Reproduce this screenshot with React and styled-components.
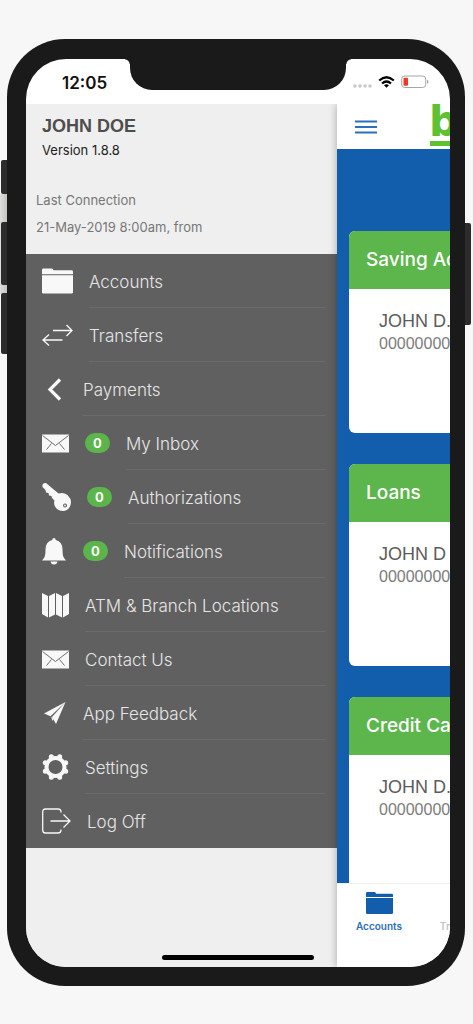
import React from "react";
import styled, { createGlobalStyle } from "styled-components";

const App = () => {
  return (
    <Page>
      <GlobalStyle />
      <Phone>
        <KeyShade />
        <SideKey side="left" top={121} height={34} />
        <SideKey side="left" top={183} height={63} />
        <SideKey side="left" top={254} height={61} />
        <SideKey side="right" top={184} height={102} />
        <Screen>
          <StatusBar>
            <Clock>12:05</Clock>
            <Notch />
            <StatusIcons>
              <Signal />
              <Wifi />
              <Battery />
            </StatusIcons>
          </StatusBar>
          <Content>
            <Drawer>
              <Profile>
                <UserName>JOHN DOE</UserName>
                <Version>Version 1.8.8</Version>
                <Connection>Last Connection</Connection>
                <Connection>21-May-2019 8:00am, from</Connection>
              </Profile>
              <Menu>
                {menuItems.map(item => (
                  <MenuRow key={item.label} {...item} />
                ))}
              </Menu>
            </Drawer>
            <Main>
              <TopBar>
                <MenuButton type="button" aria-label="Menu">
                  <Bars />
                </MenuButton>
                <Logo>b</Logo>
              </TopBar>
              <Cards>
                {accounts.map(account => (
                  <Card key={account.title}>
                    <CardTitle>{account.title}</CardTitle>
                    <CardBody>
                      <Owner>{account.owner}</Owner>
                      <Number>{account.number}</Number>
                    </CardBody>
                  </Card>
                ))}
              </Cards>
              <Tabs>
                <Tab type="button" active>
                  <FolderIcon width="27" height="24" />
                  <span>Accounts</span>
                </Tab>
                <Tab type="button">
                  <TransferIcon width="26" height="24" />
                  <span>Transfers</span>
                </Tab>
              </Tabs>
            </Main>
          </Content>
          <HomeIndicator />
        </Screen>
      </Phone>
    </Page>
  );
};

export default App;

const MenuRow = ({ icon: Icon, size, label, badge }) => {
  return (
    <MenuItem>
      <MenuAction type="button">
        <Icon width={size} height="30" />
        {badge !== undefined && <Badge>{badge}</Badge>}
        <MenuLabel>{label}</MenuLabel>
      </MenuAction>
    </MenuItem>
  );
};

const FolderIcon = props => (
  <svg viewBox="0 0 32 28" fill="currentColor" {...props}>
    <path d="M0 2.5Q0 1 1.5 1H10q1 0 1.5 1l.5 1h18.500Q32 3 32 4.500V7H0z" />
    <path d="M0 8h32v17.500q0 1.500-1.500 1.500h-29Q0 27 0 25.500z" />
  </svg>
);

const TransferIcon = props => (
  <svg
    viewBox="0 0 31 30"
    fill="none"
    stroke="currentColor"
    strokeWidth="1.3"
    {...props}
  >
    <path d="M11 10.500H29.500M24.500 5l5.500 5.500-5.500 5.500M20.500 20H1.500M7 14.500L1 20l6 5.500" />
  </svg>
);

const BackIcon = props => (
  <svg
    viewBox="0 0 25 30"
    fill="none"
    stroke="currentColor"
    strokeWidth="3.2"
    {...props}
  >
    <path d="M18 5.500L8 15.500l10 10" />
  </svg>
);

const MailIcon = props => (
  <svg viewBox="0 0 27 30" {...props}>
    <path d="M0 6.500h27v18H0z" fill="currentColor" />
    <path
      d="M.5 7.500l13 10 13-10M4.500 21.500l5-6M22.500 21.500l-5-6"
      fill="none"
      stroke="#707070"
      strokeWidth="1"
    />
  </svg>
);

const KeyIcon = props => (
  <svg viewBox="0 0 29 30" fill="currentColor" {...props}>
    <path
      fillRule="evenodd"
      d="M.5 2.500Q1.500.5 4 1l12.500 10.500q5-1.500 9 1.500 3.500 3.500 3.500 7-.5 7.500-7 9-6 .5-9-4.500-1.500-3-.5-6L10 16l-.5-2-2.500-.5-.5-2.500-2.500-.5-.5-2.500L.5 5zM23 21.500a2 2 0 1 0 .1 4 2 2 0 0 0-.1-4zm0 1.100a.9.9 0 1 1 0 1.800.9.9 0 0 1 0-1.800z"
    />
  </svg>
);

const BellIcon = props => (
  <svg viewBox="0 0 25 30" fill="currentColor" {...props}>
    <path d="M12 2q1.500 0 1.800 2 6.700 1.500 6.700 9.500 0 6.500 1.500 8.500l2 2.500H0L2 22q1.500-2 1.500-8.500Q3.500 5.500 10.200 4 10.500 2 12 2z" />
    <path d="M8.500 25.500h7q-.5 3-3.500 3t-3.500-3z" />
  </svg>
);

const MapIcon = props => (
  <svg viewBox="0 0 27 30" fill="currentColor" {...props}>
    <path d="M0 3l6 3v21.500L0 24zM7 6l6-3v21.500l-6 3zM14 3l6 3v21.500l-6-3zM21 6l6-3v21l-6 3.500z" />
  </svg>
);

const PlaneIcon = props => (
  <svg viewBox="0 0 25 30" fill="currentColor" {...props}>
    <path d="M23.500 4L2 15.500l6.500 2.800zM23.500 4L10 19l4 7z" />
    <path d="M9 18.500l1.500 4.500 1-2z" />
  </svg>
);

const GearIcon = props => (
  <svg viewBox="-13.500 -15 27 30" fill="none" stroke="currentColor" {...props}>
    <circle r="9" strokeWidth="4" />
    <path
      strokeWidth="5"
      strokeLinecap="round"
      d="M4.200-10.200v0M10.200-4.200v0M10.200 4.200v0M4.200 10.200v0M-4.200 10.200v0M-10.200 4.200v0M-10.200-4.200v0M-4.200-10.200v0"
    />
  </svg>
);

const LogoutIcon = props => (
  <svg
    viewBox="0 0 29 30"
    fill="none"
    stroke="currentColor"
    strokeWidth="1.300"
    {...props}
  >
    <path d="M19 6.500V6q0-3-3-3H3.500Q.7 3 .7 6v18q0 3 2.800 3H16q3 0 3-3v-.5M8.500 15H28M21.500 8.500L28 15l-6.500 6.500" />
  </svg>
);

const Bars = () => (
  <svg width="22" height="14" viewBox="0 0 22 14" stroke="#2b70ba" strokeWidth="2">
    <path d="M0 1.500h22M0 7h22M0 12.500h22" />
  </svg>
);

const Signal = () => (
  <svg width="19" height="14" viewBox="0 0 19 14" fill="#c9c9c9">
    <circle cx="2" cy="11" r="1.800" />
    <circle cx="7" cy="11" r="1.800" />
    <circle cx="12" cy="11" r="1.800" />
    <circle cx="17" cy="11" r="1.800" />
  </svg>
);

const Wifi = () => (
  <svg width="17" height="14" viewBox="0 0 17 14" fill="none" stroke="#000" strokeWidth="2.200">
    <path d="M1.200 5.500q7.300-6.500 14.600 0M4 8.500q4.500-4 9 0" />
    <path d="M8.500 12.800L6 10.300q2.500-2 5 0z" fill="#000" stroke="none" />
  </svg>
);

const Battery = () => (
  <svg width="28" height="14" viewBox="0 0 28 14">
    <rect x=".7" y="1" width="24" height="11.500" rx="3" fill="none" stroke="#a6a6a6" />
    <rect x="2.500" y="2.800" width="4.500" height="8" rx="1" fill="#f2382c" />
    <path d="M26 4.800q1.500.5 1.500 2t-1.500 2z" fill="#a6a6a6" />
  </svg>
);

const GlobalStyle = createGlobalStyle`
  * {
    box-sizing: border-box;
  }

  body {
    margin: 0;
    background: #f7f7f7;
    font-family: Inter, "Liberation Sans", sans-serif;
  }

  button {
    border: 0;
    padding: 0;
    background: none;
    font-family: inherit;
  }

  svg {
    flex: none;
    display: block;
  }
`;

const Page = styled.div`
  display: flex;
  min-height: 100vh;
  padding: 39px 8px 38px 7px;
`;

const Phone = styled.div`
  position: relative;
  display: flex;
  flex: 1;
  min-width: 0;
  padding: 20px 15px 19px 19px;
  border-radius: 58px;
  background: #1a1a1a;
`;

const KeyShade = styled.div`
  position: absolute;
  top: 155px;
  right: 100%;
  width: 7px;
  height: 100px;
  background: linear-gradient(90deg, #dededc, #c4c4c2);
`;

const SideKey = styled.div.withConfig({
  shouldForwardProp: prop => !["side", "top", "height"].includes(prop)
})`
  position: absolute;
  ${props => props.side}: -6px;
  top: ${props => props.top}px;
  width: 6px;
  height: ${props => props.height}px;
  border-radius: ${props => (props.side === "left" ? "2px 0 0 2px" : "0 2px 2px 0")};
  background: #2c2c2c;
`;

const Screen = styled.div`
  position: relative;
  display: flex;
  flex: 1;
  flex-direction: column;
  min-width: 0;
  overflow: hidden;
  border-radius: 40px;
  background: #fff;
`;

const StatusBar = styled.div`
  display: grid;
  grid-template-columns: 1fr 216px 1fr;
  height: 45px;
`;

const Clock = styled.div`
  padding: 12px 0 0 36px;
  font-size: 17px;
  line-height: 24px;
  font-weight: 600;
  color: #111;
`;

const Notch = styled.div`
  position: relative;
  height: 31px;
  border-radius: 0 0 22px 22px;
  background: #1a1a1a;

  &::before,
  &::after {
    content: "";
    position: absolute;
    top: 0;
    width: 5px;
    height: 5px;
  }

  &::before {
    right: 100%;
    background: radial-gradient(circle at 0 100%, transparent 4px, #1a1a1a 5px);
  }

  &::after {
    left: 100%;
    background: radial-gradient(circle at 100% 100%, transparent 4px, #1a1a1a 5px);
  }
`;

const StatusIcons = styled.div`
  display: flex;
  gap: 6px;
  padding: 16px 0 0 7px;
`;

const Content = styled.div`
  display: flex;
  flex: 1;
  overflow: hidden;
`;

const Drawer = styled.div`
  flex: none;
  width: 311px;
  background: #efefef;
`;

const Profile = styled.div`
  height: 150px;
  padding: 10px 10px 0;
`;

const UserName = styled.h1`
  margin: 0 6px;
  font-family: "Liberation Sans", Arial, sans-serif;
  font-size: 18px;
  line-height: 24px;
  color: #4e4e4e;
`;

const Version = styled.p`
  margin: 0 6px 25px;
  font-size: 13px;
  line-height: 24px;
  color: #222;
`;

const Connection = styled.p`
  margin: 0;
  font-size: 13px;
  line-height: 27px;
  color: #777;
`;

const Menu = styled.ul`
  margin: 0;
  padding: 0;
  list-style: none;
  background: #606060;
`;

const MenuItem = styled.li`
  height: 54px;
  padding: 0 12px 0 16px;
`;

const MenuAction = styled.button`
  display: flex;
  align-items: center;
  gap: 16px;
  width: 100%;
  height: 54px;
  color: #f8f8f8;
`;

const MenuLabel = styled.span`
  flex: 1;
  height: 54px;
  border-bottom: 1px solid #6b6b6b;
  font-size: 17px;
  line-height: 56px;
  font-weight: 300;
  text-align: left;
  color: #e6e6e6;

  ${MenuItem}:last-child & {
    border-bottom: 0;
  }
`;

const Badge = styled.span`
  width: 25px;
  border-radius: 10px;
  background: #5bb54a;
  font-size: 13px;
  line-height: 20px;
  font-weight: 700;
  text-align: center;
  color: #fff;
`;

const Main = styled.main`
  position: relative;
  display: flex;
  flex: none;
  flex-direction: column;
  width: 100%;
  background: #fff;
  box-shadow: 0 0 8px rgba(0, 0, 0, 0.3);
`;

const TopBar = styled.header`
  display: flex;
  align-items: flex-start;
  height: 45px;
  overflow: hidden;
`;

const MenuButton = styled.button`
  margin: 16px 53px 0 18px;
`;

const Logo = styled.div`
  height: 42px;
  border-bottom: 5px solid #5ec131;
  font-size: 44px;
  line-height: 32px;
  font-weight: 800;
  color: #5ec131;
`;

const Cards = styled.div`
  display: flex;
  flex: 1 1 0;
  flex-direction: column;
  gap: 31px;
  overflow: hidden;
  padding: 82px 12px 0;
  background: #125dac;
`;

const Card = styled.section`
  flex: none;
  height: 202px;
  overflow: hidden;
  border-radius: 6px;
  background: #fff;
`;

const CardTitle = styled.h2`
  margin: 0;
  padding: 0 17px;
  background: #5cb64b;
  font-size: 19px;
  line-height: 58px;
  font-weight: 500;
  color: #fff;
`;

const CardBody = styled.div`
  padding: 21px 30px;
  font-family: "Liberation Sans", Arial, sans-serif;
`;

const Owner = styled.p`
  margin: 0;
  font-size: 18px;
  line-height: 23px;
  color: #5c5c5c;
`;

const Number = styled.p`
  margin: 0;
  font-size: 16px;
  line-height: 22px;
  color: #7c7c7c;
`;

const Tabs = styled.nav`
  display: flex;
  height: 84px;
  border-top: 1px solid #f0f0f0;
`;

const Tab = styled.button.withConfig({
  shouldForwardProp: prop => prop !== "active"
})`
  display: flex;
  flex-direction: column;
  align-items: center;
  gap: 3px;
  width: 84px;
  padding-top: 7px;
  font-size: 10px;
  line-height: 16px;
  font-weight: 600;
  color: ${props => (props.active ? "#125dac" : "#c4c4c4")};

  span {
    color: ${props => (props.active ? "#2a6fbd" : "#c4c4c4")};
  }
`;

const HomeIndicator = styled.div`
  position: absolute;
  bottom: 7px;
  left: 50%;
  width: 152px;
  height: 5px;
  margin-left: -76px;
  border-radius: 3px;
  background: #000;
`;

const menuItems = [
  { label: "Accounts", icon: FolderIcon, size: 31 },
  { label: "Transfers", icon: TransferIcon, size: 31 },
  { label: "Payments", icon: BackIcon, size: 25 },
  { label: "My Inbox", icon: MailIcon, size: 27, badge: 0 },
  { label: "Authorizations", icon: KeyIcon, size: 29, badge: 0 },
  { label: "Notifications", icon: BellIcon, size: 25, badge: 0 },
  { label: "ATM & Branch Locations", icon: MapIcon, size: 27 },
  { label: "Contact Us", icon: MailIcon, size: 27 },
  { label: "App Feedback", icon: PlaneIcon, size: 25 },
  { label: "Settings", icon: GearIcon, size: 27 },
  { label: "Log Off", icon: LogoutIcon, size: 29 }
];

const accounts = [
  { title: "Saving Accounts", owner: "JOHN D.", number: "0000000000" },
  { title: "Loans", owner: "JOHN D", number: "0000000000" },
  { title: "Credit Cards", owner: "JOHN D.", number: "0000000000" }
];
